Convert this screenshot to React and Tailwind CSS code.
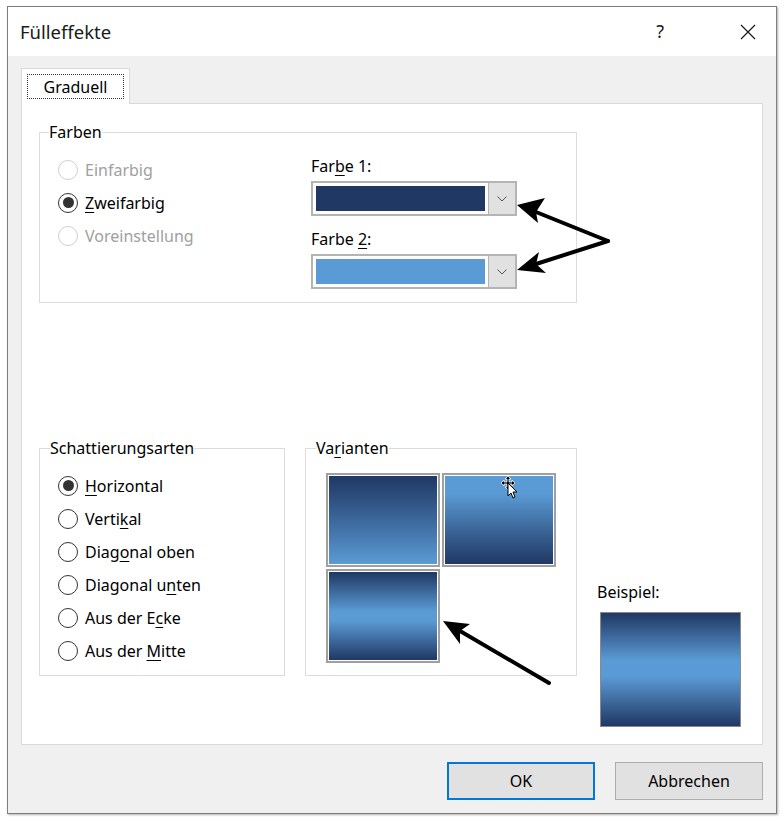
import React from 'react';

const font = { fontFamily: '"Noto Sans", "Open Sans", sans-serif' };

function Radio({ label, checked, disabled }) {
  return (
    <div className="flex items-center h-[33px] gap-[7px]">
      <span
        className={
          disabled
            ? 'w-[20px] h-[20px] rounded-full border border-[#cfcfcf] bg-white flex items-center justify-center'
            : 'w-[20px] h-[20px] rounded-full border-[1.5px] border-[#333333] bg-white flex items-center justify-center'
        }
      >
        {checked && <span className="w-[11px] h-[11px] rounded-full bg-[#333333]" />}
      </span>
      <span className={disabled ? 'text-[#a0a0a0]' : 'text-black'}>{label}</span>
    </div>
  );
}

function ColorPicker({ color }) {
  return (
    <div className="flex h-[35px] w-[206px] border-2 border-[#b4b4b4] bg-white">
      <div className="flex-1 p-[3px]">
        <div className={`h-full w-full ${color}`} />
      </div>
      <div className="w-[27px] bg-[#e1e1e1] border-l border-[#b4b4b4] flex items-center justify-center">
        <svg width="10" height="6" viewBox="0 0 10 6" fill="none">
          <path d="M0.5 0.5 L5 5 L9.5 0.5" stroke="#555" strokeWidth="1" />
        </svg>
      </div>
    </div>
  );
}

function Tile({ gradient }) {
  return (
    <div className="w-[114px] h-[94px] border-2 border-[#a0a0a0] bg-white p-[1px]">
      <div className={`h-full w-full ${gradient}`} />
    </div>
  );
}

const u = (s) => <span className="underline underline-offset-[3px] decoration-1">{s}</span>;

export default function App() {
  return (
    <div className="relative w-[783px] h-[819px] bg-white text-[16px] text-black" style={font}>
      <div className="ml-[7px] pt-[6px]">
        <div className="w-[770px] h-[808px] border border-[#7d7d7d] flex flex-col shadow-[1px_1px_2px_rgba(0,0,0,0.3)]">
          {/* title bar */}
          <div className="h-[49px] bg-white flex items-center pl-[12px] pr-[20px]">
            <span className="text-[18.5px] text-[#1a1a1a]">Fülleffekte</span>
            <span className="ml-auto text-[18px] text-[#1a1a1a] mr-[76px]">?</span>
            <svg width="16" height="16" viewBox="0 0 16 16">
              <path d="M1 1 L15 15 M15 1 L1 15" stroke="#1a1a1a" strokeWidth="1.2" />
            </svg>
          </div>

          {/* body */}
          <div className="flex-1 bg-[#f0f0f0] px-[13px] pt-[12px]">
            <div className="flex">
              <div className="relative z-10 -mb-px w-[109px] h-[36px] bg-white border border-b-0 border-[#d9d9d9] p-[5px]">
                <div className="h-full w-full border border-dotted border-[#333] flex items-center justify-center">
                  Graduell
                </div>
              </div>
            </div>

            <div className="h-[642px] bg-white border border-[#d9d9d9] pl-[17px] pt-[19px]">
              {/* Farben */}
              <fieldset className="w-[538px] h-[180px] border border-[#dcdcdc]">
                <legend className="ml-[9px] leading-[18px]">Farben</legend>
                <div className="flex pl-[18px]">
                  <div className="pt-[12px] w-[253px]">
                    <Radio label="Einfarbig" disabled />
                    <Radio label={<>{u('Z')}weifarbig</>} checked />
                    <Radio label="Voreinstellung" disabled />
                  </div>
                  <div className="pt-[15px]">
                    <div className="leading-[20px]">Far{u('b')}e 1:</div>
                    <div className="mt-[5px]">
                      <ColorPicker color="bg-[#203864]" />
                    </div>
                    <div className="leading-[20px] mt-[13px]">Farbe {u('2')}:</div>
                    <div className="mt-[5px]">
                      <ColorPicker color="bg-[#5b9bd5]" />
                    </div>
                  </div>
                </div>
              </fieldset>

              {/* lower row */}
              <div className="flex items-start mt-[136px]">
                <fieldset className="w-[246px] h-[237px] border border-[#dcdcdc]">
                  <legend className="ml-[10px] leading-[18px]">Schattierungsarten</legend>
                  <div className="pl-[18px] pt-[12px]">
                    <Radio label={<>{u('H')}orizontal</>} checked />
                    <Radio label={<>Verti{u('k')}al</>} />
                    <Radio label={<>Diag{u('o')}nal oben</>} />
                    <Radio label={<>Diagonal u{u('n')}ten</>} />
                    <Radio label={<>Aus der E{u('c')}ke</>} />
                    <Radio label={<>Aus der {u('M')}itte</>} />
                  </div>
                </fieldset>

                <fieldset className="ml-[20px] w-[272px] h-[237px] border border-[#dcdcdc]">
                  <legend className="ml-[10px] leading-[18px]">Va{u('r')}ianten</legend>
                  <div className="pl-[20px] pt-[16px] grid grid-cols-[114px_114px] gap-[2px]">
                    <Tile gradient="bg-linear-to-b from-[#203864] to-[#5b9bd5]" />
                    <Tile gradient="bg-linear-to-b from-[#5b9bd5] from-20% to-[#203864]" />
                    <Tile gradient="bg-[linear-gradient(to_bottom,#203864_0%,#5b9bd5_45%,#5b9bd5_55%,#203864_100%)]" />
                  </div>
                </fieldset>

                <div className="ml-[20px] flex flex-col shrink-0 pt-[143px]">
                  <div className="leading-[20px]">Beispiel:</div>
                  <div className="mt-[10px] ml-[3px] w-[141px] h-[115px] shrink-0 border border-[#8a8a8a] bg-[linear-gradient(to_bottom,#203864_0%,#5b9bd5_42%,#5b9bd5_56%,#203864_100%)]" />
                </div>
              </div>
            </div>

            {/* buttons */}
            <div className="flex justify-end gap-[20px] mt-[17px]">
              <button className="w-[148px] h-[38px] bg-[#e1e1e1] border-2 border-[#0078d7]">OK</button>
              <button className="w-[148px] h-[38px] bg-[#e1e1e1] border border-[#adadad]">Abbrechen</button>
            </div>
          </div>
        </div>
      </div>

      {/* annotation arrows and cursor */}
      <svg className="absolute left-0 top-0 pointer-events-none" width="783" height="819" viewBox="0 0 783 819">
        <g stroke="black" strokeWidth="4" strokeLinecap="round" fill="none">
          <path d="M608 241 L536 212" />
          <path d="M608 241 L536 264" />
          <path d="M549 683 L460 631" />
        </g>
        <g fill="black">
          <polygon points="517,205 545,198 536,212 538,223" />
          <polygon points="517,270 539,252 536,264 546,273" />
          <polygon points="443,621 470,624 460,631 460,644" />
        </g>
        <g transform="translate(501 476)">
          <path d="M7 0 L10 3 L8 3 L8 6 L11 6 L11 4 L14 7 L11 10 L11 8 L8 8 L8 11 L10 11 L7 14 L4 11 L6 11 L6 8 L3 8 L3 10 L0 7 L3 4 L3 6 L6 6 L6 3 L4 3 Z" fill="black" stroke="white" strokeWidth="0.8" />
          <path d="M7 7 L7 20 L10 17 L12 22 L14 21 L12 16 L16 16 Z" fill="white" stroke="black" strokeWidth="1" />
        </g>
      </svg>
    </div>
  );
}
